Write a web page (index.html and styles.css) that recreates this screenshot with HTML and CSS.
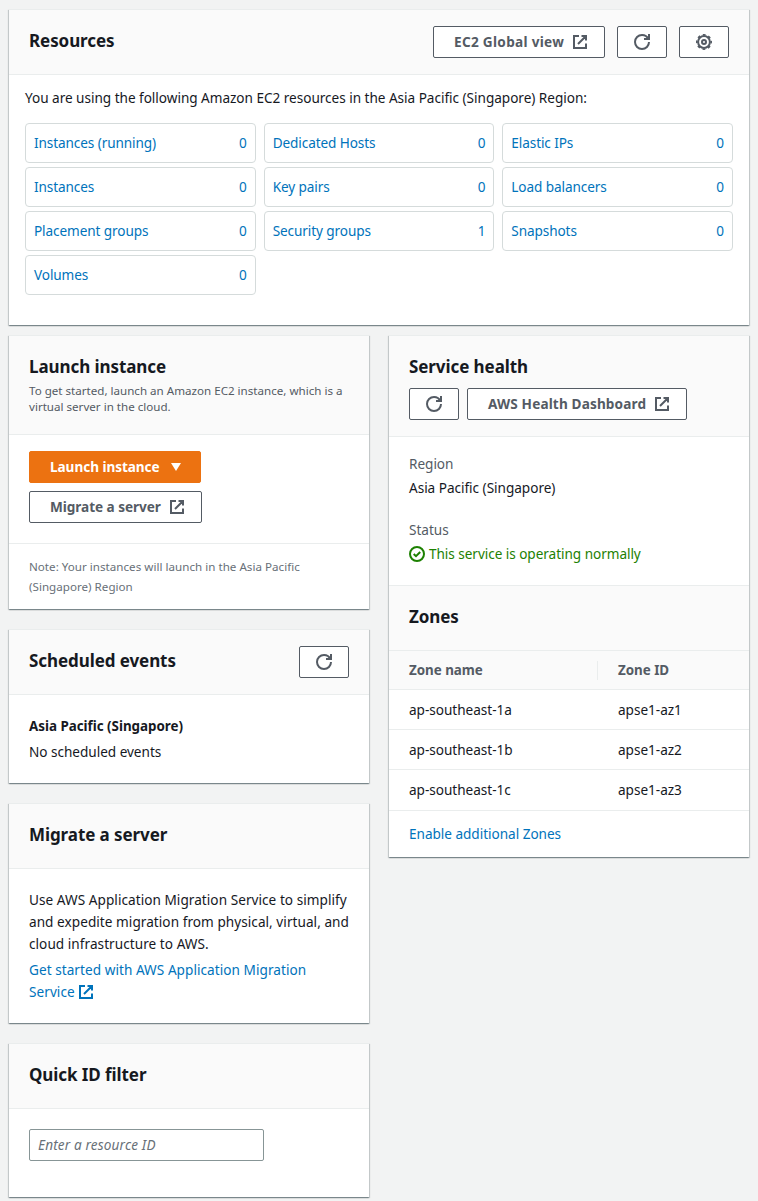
FILE: index.html
```html
<!DOCTYPE html>
<html lang="en">
<head>
<meta charset="utf-8">
<title>EC2 Dashboard</title>
<link rel="stylesheet" href="styles.css">
</head>
<body>
<svg class="defs" aria-hidden="true">
  <symbol id="external" viewBox="0 0 16 16"><path d="M7 2H2v12h12V9.500M9.500 2H14v4.500M6 10l8-8"/></symbol>
  <symbol id="refresh" viewBox="0 0 16 16"><path d="M10 5h5V0M15 8a7 7 0 1 1-7-7 6.900 6.900 0 0 1 6.300 4"/></symbol>
  <symbol id="gear" viewBox="0 0 16 16"><circle cx="8" cy="8" r="2"/><circle cx="8" cy="8" r="5.900"/><circle cx="8" cy="8" r="7.200" stroke-width="1.600" stroke-dasharray="2.827" stroke-dashoffset="1.414"/></symbol>
  <symbol id="check" viewBox="0 0 16 16"><circle cx="8" cy="8" r="7"/><path d="M4.700 8l2.300 2.200 4.200-4.200"/></symbol>
</svg>

<main class="dashboard">
  <section class="card resources">
    <header class="card-header">
      <h2>Resources</h2>
      <div class="actions">
        <a class="btn global">EC2 Global view <svg class="icon"><use href="#external"/></svg></a>
        <button class="btn square" aria-label="Refresh"><svg class="icon"><use href="#refresh"/></svg></button>
        <button class="btn square" aria-label="Settings"><svg class="icon"><use href="#gear"/></svg></button>
      </div>
    </header>
    <div class="resources-body">
      <p>You are using the following Amazon EC2 resources in the Asia Pacific (Singapore) Region:</p>
      <div class="tiles">
        <a class="tile"><span>Instances (running)</span><span>0</span></a>
        <a class="tile"><span>Dedicated Hosts</span><span>0</span></a>
        <a class="tile"><span>Elastic IPs</span><span>0</span></a>
        <a class="tile"><span>Instances</span><span>0</span></a>
        <a class="tile"><span>Key pairs</span><span>0</span></a>
        <a class="tile"><span>Load balancers</span><span>0</span></a>
        <a class="tile"><span>Placement groups</span><span>0</span></a>
        <a class="tile"><span>Security groups</span><span>1</span></a>
        <a class="tile"><span>Snapshots</span><span>0</span></a>
        <a class="tile"><span>Volumes</span><span>0</span></a>
      </div>
    </div>
  </section>

  <div class="columns">
    <div class="column">
      <section class="card launch">
        <header class="card-header stacked">
          <h2>Launch instance</h2>
          <p class="description">To get started, launch an Amazon EC2 instance, which is a virtual server in the cloud.</p>
        </header>
        <div class="launch-actions">
          <button class="btn primary">Launch instance <svg class="caret" viewBox="0 0 16 16"><path d="M3 4h10l-5 8z"/></svg></button>
          <a class="btn migrate">Migrate a server <svg class="icon"><use href="#external"/></svg></a>
        </div>
        <footer class="note">Note: Your instances will launch in the Asia Pacific (Singapore) Region</footer>
      </section>

      <section class="card events">
        <header class="card-header">
          <h2>Scheduled events</h2>
          <button class="btn square" aria-label="Refresh"><svg class="icon"><use href="#refresh"/></svg></button>
        </header>
        <div class="card-body">
          <p class="strong">Asia Pacific (Singapore)</p>
          <p>No scheduled events</p>
        </div>
      </section>

      <section class="card migration">
        <header class="card-header"><h2>Migrate a server</h2></header>
        <div class="card-body">
          <p>Use AWS Application Migration Service to simplify and expedite migration from physical, virtual, and cloud infrastructure to AWS.</p>
          <p><a class="link">Get started with AWS Application Migration Service <svg class="icon inline"><use href="#external"/></svg></a></p>
        </div>
      </section>

      <section class="card filter">
        <header class="card-header"><h2>Quick ID filter</h2></header>
        <div class="filter-body"><input class="input" type="text" placeholder="Enter a resource ID"></div>
      </section>
    </div>

    <div class="column">
      <section class="card health">
        <header class="card-header stacked">
          <h2>Service health</h2>
          <div class="health-actions">
            <button class="btn square" aria-label="Refresh"><svg class="icon"><use href="#refresh"/></svg></button>
            <a class="btn aws">AWS Health Dashboard <svg class="icon"><use href="#external"/></svg></a>
          </div>
        </header>
        <dl class="status">
          <div><dt>Region</dt><dd>Asia Pacific (Singapore)</dd></div>
          <div><dt>Status</dt><dd class="ok"><svg class="icon"><use href="#check"/></svg>This service is operating normally</dd></div>
        </dl>
        <header class="card-header zones-header"><h2>Zones</h2></header>
        <div class="zones">
          <div class="zone-row zone-head"><span>Zone name</span><span>Zone ID</span></div>
          <div class="zone-row"><span>ap-southeast-1a</span><span>apse1-az1</span></div>
          <div class="zone-row"><span>ap-southeast-1b</span><span>apse1-az2</span></div>
          <div class="zone-row"><span>ap-southeast-1c</span><span>apse1-az3</span></div>
        </div>
        <footer class="zones-footer"><a class="link">Enable additional Zones</a></footer>
      </section>
    </div>
  </div>
</main>
</body>
</html>
```
FILE: styles.css
```css
* { box-sizing: border-box; }

body {
  margin: 0;
  background: #f2f3f3;
  color: #16191f;
  font: 13.6px/22px "Noto Sans", "Open Sans", sans-serif;
  letter-spacing: -0.03px;
}

h2, p, dl, dd { margin: 0; }

h2 {
  font-size: 17px;
  line-height: 22px;
  font-weight: 700;
  letter-spacing: -0.08px;
}

.defs { position: absolute; width: 0; height: 0; }

.dashboard {
  display: flex;
  flex-direction: column;
  gap: 10px;
  padding: 9px 9px 4px;
}

.columns { display: grid; grid-template-columns: 360px 360px; gap: 20px; align-items: start; }
.column { display: flex; flex-direction: column; gap: 20px; }

.card {
  background: #fff;
  border-top: 1px solid #eaeded;
  box-shadow: 0 1px 1px 0 rgba(0, 28, 36, .3), 1px 1px 1px 0 rgba(0, 28, 36, .15), -1px 1px 1px 0 rgba(0, 28, 36, .15);
}

.card-header {
  display: flex;
  justify-content: space-between;
  height: 65px;
  padding: 16px 20px;
  background: #fafafa;
  border-bottom: 1px solid #eaeded;
}
.card-header h2 { padding-top: 4px; }
.card-header.stacked { flex-direction: column; justify-content: flex-start; }
.card-header.stacked h2 { padding-top: 0; }
.card-body { padding: 20px; }
.card-body p + p { margin-top: 4px; }

.resources { width: 740px; height: 316px; }
.actions { display: flex; gap: 12px; }
.resources-body { padding: 12px 16px; }
.tiles {
  display: grid;
  grid-template-columns: repeat(3, 1fr);
  gap: 4px 8px;
  margin-top: 14px;
}
.tile {
  display: flex;
  align-items: center;
  justify-content: space-between;
  height: 40px;
  padding: 0 8px;
  border: 1px solid #d5dbdb;
  border-radius: 4px;
  color: #0073bb;
  letter-spacing: -0.1px;
}

.btn {
  display: inline-flex;
  align-items: center;
  justify-content: space-between;
  height: 32px;
  padding: 0 20px;
  background: #fff;
  border: 1px solid #545b64;
  border-radius: 2px;
  color: #545b64;
  font: 700 13.6px/20px "Noto Sans", "Open Sans", sans-serif;
  white-space: nowrap;
}
.btn.square { width: 50px; padding: 0; justify-content: center; }
.btn.global { width: 172px; padding-right: 16px; letter-spacing: 0.3px; }
.btn.primary {
  width: 172px;
  padding-right: 16px;
  background: #ec7211;
  border-color: #ec7211;
  color: #fff;
  letter-spacing: -0.06px;
}
.btn.migrate { width: 173px; padding-right: 16px; letter-spacing: -0.05px; }
.btn.aws { width: 220px; padding-right: 16px; letter-spacing: 0.14px; }

.icon {
  flex: none;
  width: 16px;
  height: 16px;
  fill: none;
  stroke: currentColor;
  stroke-width: 2;
}
.icon.inline { vertical-align: -3px; }
.caret { width: 16px; height: 16px; fill: currentColor; }

.launch { height: 274px; }
.launch .card-header { height: 99px; padding-top: 20px; }
.description { margin-top: 5px; color: #545b64; font-size: 11.6px; line-height: 16px; letter-spacing: 0; }
.launch-actions {
  display: flex;
  flex-direction: column;
  align-items: flex-start;
  gap: 8px;
  height: 109px;
  padding: 16px 20px;
  border-bottom: 1px solid #eaeded;
}
.note { padding: 13px 20px; color: #687078; font-size: 11.6px; line-height: 20px; letter-spacing: 0.02px; }

.events { height: 154px; }
.strong { font-size: 13.4px; font-weight: 700; letter-spacing: -0.02px; }
.migration { height: 220px; letter-spacing: 0.045px; }
.link { color: #0073bb; }

.filter { height: 154px; }
.filter-body { padding: 20px; }
.input {
  display: block;
  width: 235px;
  height: 32px;
  padding: 0 8px 2px;
  border: 1px solid #879596;
  border-radius: 2px;
  background: #fff;
  color: #16191f;
  font: 13.6px/22px "Noto Sans", "Open Sans", sans-serif;
}
.input::placeholder { color: #687078; font-style: italic; letter-spacing: 0.15px; opacity: 1; }

.health { height: 522px; }
.health > .stacked { height: 101px; padding-top: 20px; }
.health-actions { display: flex; gap: 8px; margin-top: 10px; }
.status { display: flex; flex-direction: column; gap: 20px; height: 148px; padding: 16px 20px; }
.status dt { height: 24px; color: #545b64; }
.status dd { height: 22px; }
.status .ok { display: flex; align-items: center; gap: 4px; color: #1d8102; letter-spacing: -0.05px; }
.zones-header { height: 66px; border-top: 1px solid #eaeded; }
.zone-row {
  display: grid;
  grid-template-columns: 209px 1fr;
  align-items: center;
  height: 40px;
  border-bottom: 1px solid #eaeded;
}
.zone-row span { padding-left: 20px; }
.zone-row:last-child { height: 41px; }
.zone-head {
  height: 39px;
  background: #fafafa;
  color: #545b64;
  font-size: 13.4px;
  font-weight: 700;
}
.zone-head span { line-height: 19px; }
.zone-head span:first-child { border-right: 1px solid #eaeded; }
.zones-footer { padding: 12px 20px; }
```
